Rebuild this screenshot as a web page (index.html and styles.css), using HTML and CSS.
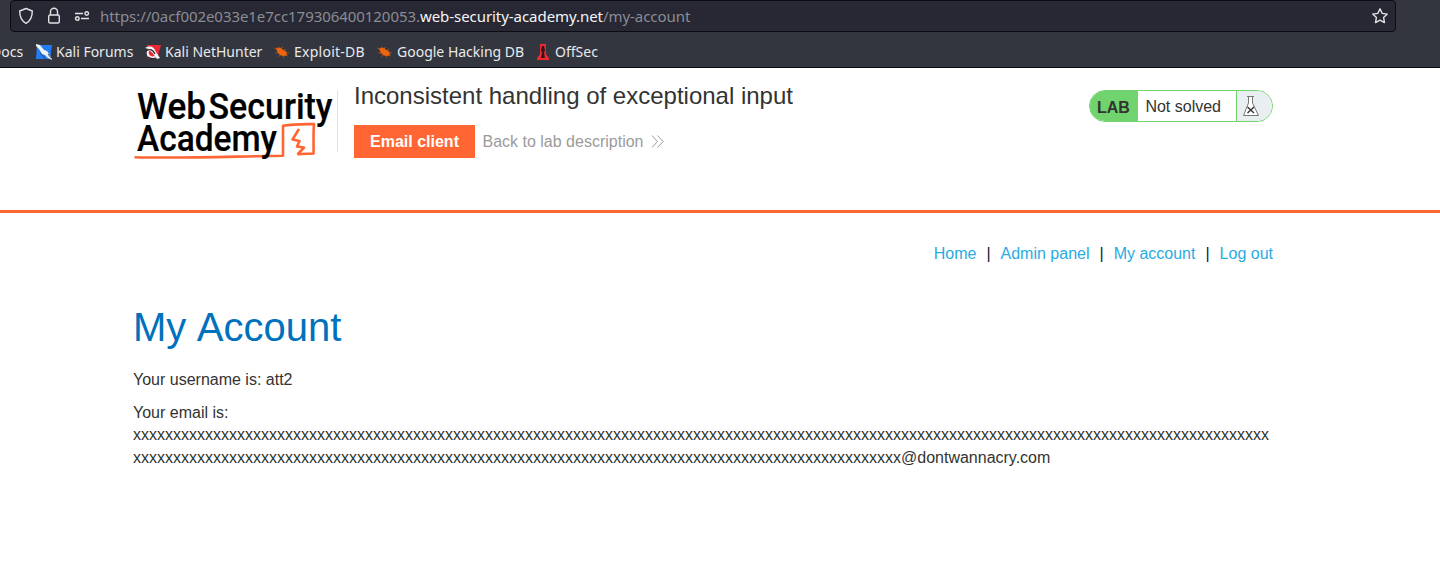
FILE: index.html
```html
<!DOCTYPE html>
<html lang="en">
<head>
<meta charset="utf-8">
<title>Inconsistent handling of exceptional input</title>
<link rel="stylesheet" href="styles.css">
</head>
<body>
<div class="browser">
  <div class="urlbar">
    <svg class="ui-icon" width="16" height="18" viewBox="0 0 16 18"><path d="M8 1.500 14.300 4C14.300 9.500 12.500 14 8 16.300 3.500 14 1.700 9.500 1.700 4Z"/></svg>
    <svg class="ui-icon lock" width="16" height="18" viewBox="0 0 16 18"><path d="M4.500 8V4.800a3.500 3.500 0 0 1 7 0V8"/><rect x="2.700" y="8" width="10.600" height="8" rx="1.500"/></svg>
    <svg class="ui-icon perms" width="16" height="18" viewBox="0 0 16 18"><path d="M1 6.500h8M7 11.500h8"/><circle cx="12.700" cy="6.500" r="1.800"/><circle cx="3.300" cy="11.500" r="1.800"/></svg>
    <span class="url">https://0acf002e033e1e7cc179306400120053.<b>web-security-academy.net</b>/my-account</span>
    <svg class="ui-icon star" width="18" height="18" viewBox="0 0 18 18"><path d="m9 1.800 2.200 4.600 5.100.7-3.700 3.500.9 5L9 13.200l-4.500 2.400.9-5L1.700 7.100l5.100-.7Z"/></svg>
  </div>
  <div class="bookmarks">
    <span class="bookmark docs">Docs</span>
    <span class="bookmark forums"><svg width="16" height="16" viewBox="0 0 16 16"><path fill="#237cf5" d="M1 1h15l-2 14H0Z"/><path fill="#eef2f5" d="m0 0 4 1 4 5 3 1 4 6 1 3-4-2-3-3-3-1-3-5-3-3Z"/><path fill="none" stroke="#34465f" d="m4 9 3 3 2 3M12 10l3 4"/></svg>Kali Forums</span>
    <span class="bookmark nethunter"><svg width="16" height="16" viewBox="0 0 16 16"><path fill="#ed2635" d="M2 1h14l-3 11-4 3H3Z"/><path fill="#f3f3f5" d="M0 4C6 1 9 3 11 8l4 6-3 1-3-4C5 5 3 7 4 10c1 2 3 3 6 2l1 2c-4 2-8 1-9-3-1-3 0-5 2-6Z"/><path fill="none" stroke="#25252d" stroke-width="1.300" d="M1 7c4-3 7-1 9 3M3 13c2 2 5 2 8 1"/></svg>Kali NetHunter</span>
    <span class="bookmark exploit"><svg width="16" height="16" viewBox="0 0 16 16"><path fill="#ed650f" d="M2 5c2-2 5-2 7 1 3 0 4 3 4 5-3 2-7 1-9-2Z"/><path fill="none" stroke="#c95516" stroke-width=".7" d="M4 5 0 4M4 9H1M6 5l3-2M10 6l2-1M11 8l4 1M6 11l-2 2M9 12l1 2M12 11l2 1"/></svg>Exploit-DB</span>
    <span class="bookmark google"><svg width="16" height="16" viewBox="0 0 16 16"><path fill="#ed650f" d="M2 5c2-2 5-2 7 1 3 0 4 3 4 5-3 2-7 1-9-2Z"/><path fill="none" stroke="#c95516" stroke-width=".7" d="M4 5 0 4M4 9H1M6 5l3-2M10 6l2-1M11 8l4 1M6 11l-2 2M9 12l1 2M12 11l2 1"/></svg>Google Hacking DB</span>
    <span class="bookmark offsec"><svg width="16" height="16" viewBox="0 0 16 16"><path fill="#ed2930" d="M5 0h6v10l3 4v2H2v-2l3-4Z"/><path fill="#36151b" d="M7 2h2l1 4-1 3 1 5H6l1-5-1-3Z"/></svg>OffSec</span>
  </div>
</div>
<header class="lab-header">
  <div class="container header-row">
    <svg class="logo" width="204" height="76" viewBox="0 0 204 76">
      <path class="sketch" d="M1.500 68.200c45 1.300 92-.6 148.500-1.500V36.700c11-1.800 20-1.500 31-1.700-.9 10-.2 20-.5 29.500-5 .5-10 .1-16 .8"/>
      <path class="sketch" d="m166 40-6.500 10.500 7 1.500-2.500 5.500 7 1-6.500 7"/>
      <g class="logo-text"><text x="4" y="29.500" textLength="69" lengthAdjust="spacingAndGlyphs">Web</text><text x="75.500" y="29.500" textLength="124" lengthAdjust="spacingAndGlyphs">Security</text><text x="4" y="62" textLength="140" lengthAdjust="spacingAndGlyphs">Academy</text></g>
    </svg>
    <div class="title-block">
      <h2>Inconsistent handling of exceptional input</h2>
      <div class="actions"><a class="button">Email client</a><a class="back">Back to lab description<svg width="13" height="13" viewBox="0 0 13 13"><path d="m1 .5 5.500 6L1 12.500M6.500.5l5.500 6-5.500 6"/></svg></a></div>
    </div>
    <div class="lab-status"><strong>LAB</strong><span class="state">Not solved</span><span class="flask"><svg width="18" height="22" viewBox="0 0 18 22"><path fill="#fff" stroke="#777" d="M5 1.500h7M6.500 1.500V8L1.500 20.500h15L10.500 8V1.500"/><path fill="none" stroke="#333" stroke-width="1.400" d="m5.500 12 6.500 6m0-6-6.500 6"/></svg></span></div>
  </div>
</header>
<main class="container account">
  <nav><a>Home</a><i>|</i><a>Admin panel</a><i>|</i><a>My account</a><i>|</i><a>Log out</a></nav>
  <h1>My Account</h1>
  <p>Your username is: att2</p>
  <p>Your email is: <span id="email"></span></p>
</main>
<script src="account.js"></script>
</body>
</html>
```

FILE: styles.css
```css
* { box-sizing: border-box; }
body { margin: 0; height: 576px; overflow: hidden; background: #fff; color: #333332; font: 16px/22.85px "Liberation Sans", Arial, sans-serif; }
.browser { height: 68px; overflow: hidden; background: #33363e; border-bottom: 1px solid #0d0e12; font-family: "Noto Sans", sans-serif; color: #e9e9ec; }
.urlbar { display: flex; align-items: center; width: 1386px; height: 32px; margin-left: 10px; padding: 0 6px 0 7px; background: #272833; border: 1px solid #0c0d13; border-radius: 4px; }
.ui-icon { flex: none; fill: none; stroke: #e2e2e5; stroke-width: 1.4; stroke-linejoin: round; }
.lock { margin-left: 12px; }
.perms { margin-left: 12px; }
.url { margin-left: 10px; font-size: 15px; line-height: 30px; letter-spacing: -.055px; color: #8b8c95; white-space: nowrap; }
.url b { font-weight: 400; color: #f5f5f8; }
.star { margin-left: auto; }
.bookmarks { display: flex; align-items: center; height: 40px; font-size: 14px; line-height: 20px; white-space: nowrap; }
.bookmark { display: flex; align-items: center; flex: none; gap: 4px; }
.docs { width: 45px; margin-left: -9px; }
.forums { width: 109px; }
.nethunter { width: 129px; }
.exploit { width: 103px; letter-spacing: .25px; }
.google { width: 158px; }
.container { width: 1140px; margin: 0 auto; transform: translateX(-17px); }
.lab-header { height: 145px; border-bottom: 3px solid #ff6633; }
.header-row { display: flex; align-items: flex-start; padding-top: 14px; }
.logo { flex: none; margin-top: 7px; overflow: visible; }
.sketch { fill: none; stroke: #ff6633; stroke-width: 2.6; stroke-linejoin: round; }
.logo-text { fill: #000; stroke: #000; stroke-width: .2; font: 500 37px Roboto, sans-serif; }
.title-block { padding-left: 17px; position: relative; }
.title-block::before { content: ""; position: absolute; left: 0; top: 8px; width: 1px; height: 62px; background: #e2e2e2; }
h2 { margin: 0; font-size: 24px; line-height: 27px; font-weight: 400; }
.actions { display: flex; margin-top: 16px; line-height: 33px; }
.button { width: 121px; height: 33px; background: #ff6633; color: #fff; text-align: center; font-weight: 700; }
.back { display: flex; align-items: center; margin-left: 7.5px; color: #9b9b9b; }
.back svg { margin-left: 7.5px; fill: none; stroke: #9b9b9b; stroke-width: 1; }
.lab-status { display: flex; width: 184px; height: 32px; margin: 8px 0 0 auto; overflow: hidden; border: 1px solid #70d36d; border-radius: 16px; line-height: 31px; }
.lab-status strong { width: 48px; padding-left: 7px; line-height: 33px; background: #70d36d; }
.state { width: 98px; padding-left: 7.4px; }
.flask { display: flex; flex: 1; align-items: center; padding-left: 5px; border-left: 1px solid #70d36d; background: #e9eef0; }
nav { display: flex; justify-content: flex-end; padding-top: 29px; line-height: 23px; color: #29abe2; }
nav i { margin: 0 10px; color: #123; font-style: normal; }
h1 { margin: 40px 0 18.72px; color: #0071bc; font-size: 40px; line-height: 45px; font-weight: 400; word-spacing: 1.5px; }
p { margin: 0 0 10px; overflow-wrap: break-word; }
```

FILE: account.js
```js
const domain = "@dontwannacry.com";
document.getElementById("email").textContent = "x".repeat(255 - domain.length) + domain;
```
